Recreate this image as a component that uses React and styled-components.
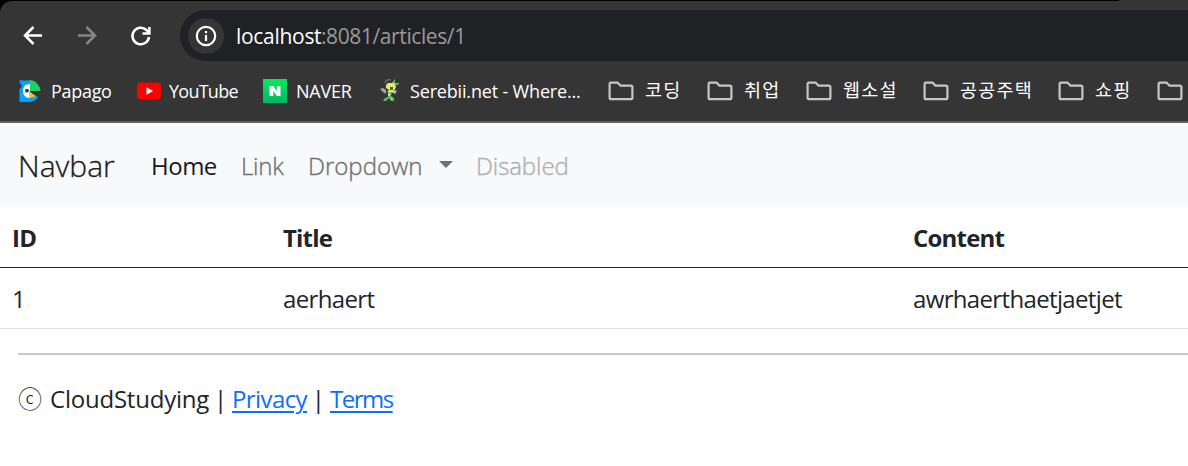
import React from "react";
import styled, { createGlobalStyle } from "styled-components";

const Global = createGlobalStyle`
  * { box-sizing: border-box; }
  body { margin: 0; background: #fff; color: #212529; overflow: hidden;
    font-family: "Open Sans", "Noto Sans CJK KR", sans-serif; font-size: 24px; }
  svg { display: block; flex: none; }
`;

const Frame = styled.div`background: linear-gradient(90deg, #000 1118px, #353535 1120px); height: 123px; padding-top: 1px;`;
const Chrome = styled.header`
  height: 122px; background: #353535; border-radius: 12px 0 0 0;
  border-bottom: 2px solid #625f5f; padding-top: 9px;
`;
const Toolbar = styled.div`display: flex; align-items: center; height: 51px; padding-left: 20px;`;
const ToolButton = styled.button`
  width: 26px; height: 26px; padding: 0; margin-right: 28px; border: 0; background: none;
  color: ${(p) => (p.$dim ? "#868686" : "#fff")};
`;
const Address = styled.div`
  display: flex; align-items: center; flex: 1; height: 51px; margin-left: -2px; padding-left: 8px;
  background: #202125; border-radius: 26px 0 0 26px; color: #999a9b; font-size: 21px;
  white-space: nowrap;
`;
const InfoBadge = styled.span`
  display: grid; place-items: center; width: 36px; height: 36px; margin-right: 12px;
  border-radius: 50%; background: #353535; color: #fff;
`;
const Text = styled.span`
  display: inline-block; white-space: nowrap; line-height: 28px;
  width: ${(p) => (p.$w ? p.$w + "px" : "auto")};
  letter-spacing: ${(p) => p.$track || 0}px;
`;
const Host = styled(Text)`color: #fff;`;
const Bookmarks = styled.nav`
  display: flex; align-items: center; height: 58px; padding-left: 18px; margin-top: 1px; overflow: hidden;
  color: #fff; font-size: 18px;
`;
const Bookmark = styled.a`
  display: flex; flex: none; align-items: center; gap: ${(p) => p.$gap || 10}px;
  width: ${(p) => p.$w}px;
`;
const FolderName = styled(Text)`padding-bottom: 2px; line-height: 26px; font-size: 18.5px; letter-spacing: 1.2px;`;

const Navbar = styled.nav`
  display: flex; align-items: center; height: 84px; padding: 1px 18px 0; background: #f8f9fa;
`;
const Brand = styled.a`width: 133px; font-size: 30px; font-weight: 300; color: #191a1a; -webkit-text-stroke: 0.3px;`;
const NavLink = styled.a`
  display: flex; align-items: center; white-space: nowrap; width: ${(p) => p.$w}px; color: ${(p) => p.$c};
  font-weight: ${(p) => p.$weight || 300}; letter-spacing: ${(p) => p.$track || 0}px;
  -webkit-text-stroke: ${(p) => (p.$weight ? 0 : 0.35)}px;
`;
const Caret = styled.i`
  margin: -3px 0 0 16px; border: 7px solid transparent; border-top-color: #6f7071; border-bottom: 0;
`;

const Table = styled.table`
  width: 100%; border-collapse: separate; border-spacing: 0; table-layout: fixed; line-height: 36px;
  th, td { height: 61px; padding: 13px 12px 11px; text-align: left; }
  th { border-bottom: 1px solid #212529; letter-spacing: -0.8px; }
  td { border-bottom: 1px solid #dee2e6; letter-spacing: -0.65px; }
`;
const Col = styled.col`width: ${(p) => p.$w}px;`;
const Rule = styled.hr`margin: 24px 0 0 18px; border: 0; height: 2px; background: #c7c8c9;`;
const Footer = styled.footer`
  display: flex; align-items: center; padding: 26px 18px 0; line-height: 36px; white-space: nowrap;
`;
const Copyright = styled(Text)`font-weight: 300;`;
const FooterLink = styled.a`
  color: #0d6efd; text-decoration: underline; text-underline-offset: 3px; text-decoration-thickness: 2px;
  letter-spacing: ${(p) => p.$track || 0}px;
`;
const Divider = styled.span`width: 23px; text-align: center;`;

const Stroke = ({ d, w = 26 }) => (
  <svg width={w} height={w} viewBox="0 0 26 26" fill="none" stroke="currentColor" strokeWidth="2.5"><path d={d} /></svg>
);
const Folder = () => (
  <svg width="26" height="20" viewBox="0 0 26 20" fill="none" stroke="#c7c7c7" strokeWidth="2.2" strokeLinejoin="round">
    <path d="M2.5 1.6H9.5L12.3 4.6H22.8Q24.4 4.6 24.4 6.2V16.4Q24.4 18.2 22.8 18.2H3.2Q1.6 18.2 1.6 16.4V3Q1.6 1.6 2.5 1.6Z" />
  </svg>
);
const Papago = () => (
  <svg width="23" height="22" viewBox="0 0 23 22">
    <path d="M1.5 0Q8 1 12 0V22H1.5V9Q4 8 3.5 5Q1 3 1.5 0Z" fill="#08a2fa" />
    <path d="M11 12L20 17Q17 22 11 22Z" fill="#08a2fa" />
    <path d="M12 4Q5 4 5 11T12 18Z" fill="#fff" />
    <path d="M12 0Q21 1 22.5 11H12Z" fill="#20cf67" />
    <path d="M11 11L17.5 16Q14 18.5 11 17Z" fill="#ffc20e" />
    <circle cx="9" cy="10.7" r="1.9" fill="#24395d" />
  </svg>
);
const YouTube = () => (
  <svg width="24" height="18" viewBox="0 0 24 18">
    <rect width="24" height="17" y=".5" rx="4" fill="#f00" /><path d="M9.5 5.2L16 9L9.5 12.8Z" fill="#fff" />
  </svg>
);
const Naver = () => (
  <svg width="24" height="24" viewBox="0 0 24 24">
    <defs><linearGradient id="ng" x2="0" y2="1"><stop stopColor="#05e960" /><stop offset="1" stopColor="#08b55f" /></linearGradient></defs>
    <rect width="24" height="24" fill="url(#ng)" />
    <path d="M6.5 7H10.3L13.8 12V7H17.5V17H13.8L10.3 12V17H6.5Z" fill="#fff" />
  </svg>
);
const Serebii = () => (
  <svg width="20" height="24" viewBox="0 0 20 24">
    <path d="M5 4Q6 0 11 1" stroke="#62626a" strokeWidth="1.6" fill="none" />
    <path d="M0 10L3 9L6 11L6 15L3 13Z" fill="#a7a9b0" />
    <path d="M11 5L15 0L15 4L19 4L19 5L15 7Z" fill="#67b957" />
    <path d="M6 6L8 4L14 4L16 8L14 12L12 14L7 13L9 11L6 9Z" fill="#e5e96b" />
    <path d="M10 8h3v3h-3z" fill="#5b5a3c" />
    <path d="M12 13L17 11L15 15Z" fill="#c5d3d8" />
    <path d="M8 13H12L11 17L14 19L14 22L11 22L9 19L6 22H3L5 19L8 18Z" fill="#65bd61" />
    <path d="M8 14h2v3H8zM10 19h2v1h-2z" fill="#b9ea77" />
  </svg>
);

const folders = [["코딩", 99], ["취업", 99], ["웹소설", 117], ["공공주택", 135], ["쇼핑", 99], ["", 40]];

export default function App() {
  return (
    <>
      <Global />
      <Frame>
        <Chrome>
          <Toolbar>
            <ToolButton><Stroke d="M22 12.5H5M13.5 4L5 12.5L13.5 21" /></ToolButton>
            <ToolButton $dim><Stroke d="M4 12.5H21M12.5 4L21 12.5L12.5 21" /></ToolButton>
            <ToolButton><Stroke d="M21 14A8.3 8.3 0 1 1 18.5 7L21 9.8M21.4 4V10.5H14.5" /></ToolButton>
            <Address>
              <InfoBadge>
                <svg width="22" height="22" viewBox="0 0 22 22" fill="none" stroke="currentColor" strokeWidth="2.2">
                  <circle cx="11" cy="11" r="9.2" /><path d="M11 10V16M11 6V8.2" />
                </svg>
              </InfoBadge>
              <Host $w={85} $track={-0.3}>localhost</Host><Text $track={-0.4}>:8081/articles/1</Text>
            </Address>
          </Toolbar>
          <Bookmarks>
            <Bookmark $w={119}><Papago /><Text $track={-0.3}>Papago</Text></Bookmark>
            <Bookmark $w={126} $gap={8}><YouTube /><Text $track={-0.75}>YouTube</Text></Bookmark>
            <Bookmark $w={117} $gap={9}><Naver /><Text $track={-0.2}>NAVER</Text></Bookmark>
            <Bookmark $w={228}><Serebii /><Text $track={-0.17}>Serebii.net - Where...</Text></Bookmark>
            {folders.map(([name, w]) => (
              <Bookmark key={w + name} $w={w} $gap={11}><Folder /><FolderName>{name}</FolderName></Bookmark>
            ))}
          </Bookmarks>
        </Chrome>
      </Frame>
      <Navbar>
        <Brand>Navbar</Brand>
        <NavLink $w={90} $c="#191a1a" $weight={400} $track={-0.5}>Home</NavLink>
        <NavLink $w={67} $c="#6f7071" $track={-0.2}>Link</NavLink>
        <NavLink $w={168} $c="#6f7071">Dropdown<Caret /></NavLink>
        <NavLink $w={100} $c="#aeafb0" $track={-0.1}>Disabled</NavLink>
      </Navbar>
      <Table>
        <colgroup><Col $w={271} /><Col $w={630} /><Col $w={287} /></colgroup>
        <thead><tr><th>ID</th><th>Title</th><th>Content</th></tr></thead>
        <tbody><tr><td>1</td><td>aerhaert</td><td>awrhaerthaetjaetjet</td></tr></tbody>
      </Table>
      <Rule />
      <Footer>
        <Copyright $w={32}>ⓒ</Copyright><Text $w={159} $track={-0.22}>CloudStudying</Text><Divider>|</Divider>
        <FooterLink $track={-0.6}>Privacy</FooterLink><Divider>|</Divider><FooterLink $track={-1.5}>Terms</FooterLink>
      </Footer>
    </>
  );
}
